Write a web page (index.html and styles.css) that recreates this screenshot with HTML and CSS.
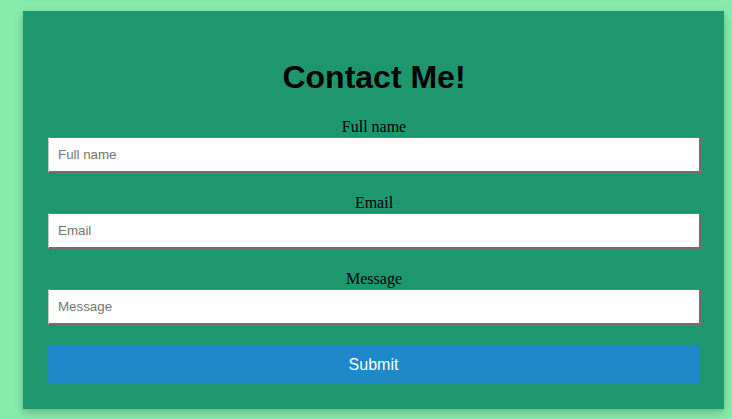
FILE: index.html
```html
<!DOCTYPE html>
<html>
<head>
<meta charset="utf-8">
<link rel="stylesheet" href="styles.css">
</head>
<body>
<div class="card">
  <h1 class="title">Contact Me!</h1>
  <form class="form">
    <label class="label" for="name">Full name</label>
    <input class="field" id="name" type="text" placeholder="Full name">
    <label class="label" for="email">Email</label>
    <input class="field" id="email" type="text" placeholder="Email">
    <label class="label" for="msg">Message</label>
    <input class="field" id="msg" type="text" placeholder="Message">
    <button class="submit" type="button">Submit</button>
  </form>
</div>
</body>
</html>
```
FILE: styles.css
```css
html, body {
  margin: 0;
  padding: 0;
}
body {
  background: #86ebab;
  padding: 11px 0 0 23px;
  height: 419px;
  box-sizing: border-box;
  font-family: "Liberation Serif", serif;
}
.card {
  width: 701px;
  height: 398px;
  box-sizing: border-box;
  background: #1f976e;
  padding: 25px 24px 0 25px;
  box-shadow: 0 3px 8px rgba(0, 0, 0, 0.25);
}
.title {
  margin: 23px 0 22px;
  font-family: "Liberation Sans", sans-serif;
  font-size: 32px;
  font-weight: bold;
  text-align: center;
  line-height: 37px;
  color: #000;
}
.form {
  display: flex;
  flex-direction: column;
}
.label {
  display: block;
  text-align: center;
  font-size: 16px;
  line-height: 18px;
  height: 19px;
  color: #000;
}
.field {
  display: block;
  width: 653px;
  height: 36px;
  box-sizing: border-box;
  margin: 0 0 21px;
  padding: 0 9px;
  border-style: solid;
  border-width: 1px 2px 2px 1px;
  border-color: #767676 #6f6f6f #6f6f6f #c8c8c8;
  background: #fff;
  font-family: "Liberation Sans", sans-serif;
  font-size: 13.33px;
  color: #000;
}
.field::placeholder {
  color: #757575;
}
.submit {
  display: block;
  width: 651px;
  height: 37px;
  margin-top: 0;
  border: 0;
  background: #1e88c9;
  color: #fff;
  font-family: "Liberation Sans", sans-serif;
  font-size: 16px;
}
```
